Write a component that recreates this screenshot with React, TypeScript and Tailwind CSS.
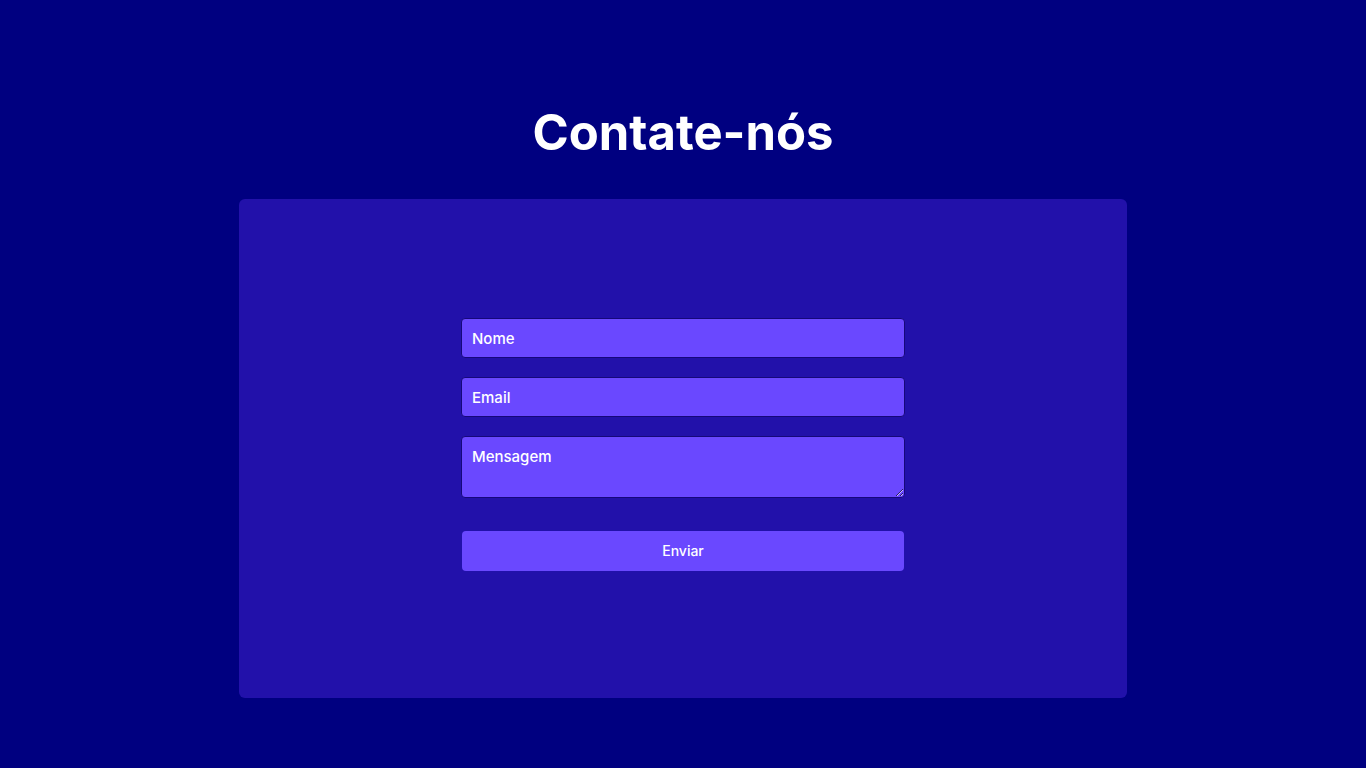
import React from "react";

export default function App() {
  return (
    <div
      className="min-h-screen w-full bg-[#000080] flex flex-col items-center"
      style={{ fontFamily: "Inter, 'Noto Sans', sans-serif" }}
    >
      <h1 className="mt-[104px] h-[58px] text-[49px] leading-[58px] font-bold text-white tracking-[0px]">
        Contate-nós
      </h1>
      <div className="mt-[37px] w-[888px] h-[499px] bg-[#2211aa] rounded-[6px] flex justify-center pt-[119px]">
        <form className="w-[444px] flex flex-col" onSubmit={(e) => e.preventDefault()}>
          <input
            type="text"
            placeholder="Nome"
            className="h-[40px] w-full rounded-[4px] border border-[#16087a] bg-[#6a48ff] px-[10px] text-[15px] font-medium text-white placeholder:text-white outline-none"
          />
          <input
            type="email"
            placeholder="Email"
            className="mt-[19px] h-[40px] w-full rounded-[4px] border border-[#16087a] bg-[#6a48ff] px-[10px] text-[15px] font-medium text-white placeholder:text-white outline-none"
          />
          <textarea
            placeholder="Mensagem"
            className="mt-[19px] h-[62px] w-full rounded-[4px] border border-[#16087a] bg-[#6a48ff] px-[10px] pt-[10px] pb-[6px] text-[15px] leading-[20px] font-medium text-white placeholder:text-white outline-none"
          />
          <button
            type="submit"
            className="mt-[33px] mx-[1px] h-[40px] pb-[2px] rounded-[4px] bg-[#6a48ff] text-[14px] font-medium text-white"
          >
            Enviar
          </button>
        </form>
      </div>
    </div>
  );
}
